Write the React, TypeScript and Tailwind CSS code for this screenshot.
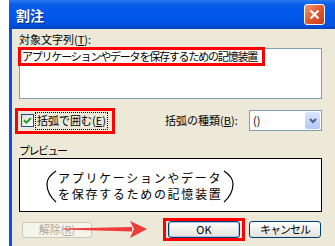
const jp = "font-['Noto_Sans_CJK_JP','Noto_Sans_CJK_SC',sans-serif]";

function CloseButton() {
  return (
    <div className="flex h-[21px] w-[21px] items-center justify-center rounded-[3px] border border-white bg-gradient-to-br from-[#F09878] via-[#E0582E] to-[#C43E18]">
      <svg width="11" height="11" viewBox="0 0 11 11">
        <path d="M1.5 1.5 L9.5 9.5 M9.5 1.5 L1.5 9.5" stroke="white" strokeWidth="2.2" />
      </svg>
    </div>
  );
}

function Checkbox() {
  return (
    <div className="flex h-[13px] w-[13px] items-center justify-center border border-[#1C5180] bg-gradient-to-br from-[#DCDCD7] to-white">
      <svg width="9" height="9" viewBox="0 0 9 9">
        <path d="M1 4.2 L3.4 6.6 L8 2" stroke="#21A121" strokeWidth="2" fill="none" />
      </svg>
    </div>
  );
}

function Paren({ right }: { right?: boolean }) {
  return (
    <svg width="13" height="34" viewBox="0 0 13 34" className="shrink-0">
      <path
        d={right ? 'M2 2 Q11 8 11 15 Q11 25 2 33' : 'M11 2 Q2 8 2 15 Q2 25 11 33'}
        stroke="black"
        strokeWidth="1.2"
        fill="none"
      />
    </svg>
  );
}

export default function App() {
  return (
    <div className={`relative h-[246px] w-[335px] overflow-hidden bg-white pl-[9px] text-black ${jp}`}>
      <div className="flex h-full flex-col">
        {/* title bar */}
        <div className="flex h-[29px] shrink-0 items-center justify-between bg-[linear-gradient(180deg,#2B78F0_0%,#0A5DE8_15%,#0058EE_50%,#0053E0_85%,#0043BE_100%)] pl-[7px] pr-[10px]">
          <span className="text-[14px] font-bold leading-none text-white [text-shadow:1px_1px_0_#0A2A8C]">割注</span>
          <CloseButton />
        </div>

        <div className="flex flex-1 border-l-[3px] border-[#0A52DE] bg-[#ECE9D8]">
          <div className="flex flex-1 flex-col pl-[7px] pr-[13px]">
            <div className="mt-[3px] h-[14px] text-[11px] leading-[14px]">
              対象文字列(<u>T</u>):
            </div>

            <div className="mt-[2px] h-[51px] border border-[#7F9DB9] bg-white">
              <div className="-ml-[2px] -mt-[2px] flex h-[19px] w-[247px] items-center border-[3px] border-[#FF0000] pl-[1px]">
                <span className="whitespace-nowrap text-[11px] leading-[13px] tracking-[-1.2px]">
                  アプリケーションやデータを保存するための記憶装置
                </span>
              </div>
            </div>

            <div className="mt-[8px] flex h-[27px] items-center">
              <div className="-ml-[4px] flex h-[26px] w-[100px] items-center border-[3px] border-[#FF0000] pl-[3px]">
                <Checkbox />
                <span className="ml-[1px] flex h-[18px] items-center whitespace-nowrap border border-dotted border-black px-[1px] text-[11px] leading-none">
                  括弧で囲む(<u>E</u>)
                </span>
              </div>
              <span className="ml-[50px] whitespace-nowrap text-[11px] leading-none">
                括弧の種類(<u>B</u>):
              </span>
              <div className="ml-auto flex h-[21px] w-[73px] items-center border border-[#7F9DB9] bg-white p-[1px]">
                <span className="flex-1 pl-[2px] text-[11px] leading-none">()</span>
                <div className="flex h-[17px] w-[15px] items-center justify-center rounded-[2px] bg-gradient-to-b from-[#DCE7FE] to-[#B2C6F5]">
                  <svg width="8" height="6" viewBox="0 0 8 6">
                    <path d="M1 1 L4 4 L7 1" stroke="#4D6185" strokeWidth="2" fill="none" />
                  </svg>
                </div>
              </div>
            </div>

            <div className="mt-[9px] h-[14px] text-[11px] leading-[14px] tracking-[-1.5px]">プレビュー</div>

            <div className="mt-[1px] flex h-[54px] border border-black bg-white pl-[25px] pt-[10px]">
              <Paren />
              <div className="pt-[1px] text-[12px] leading-[16px] tracking-[1.7px]">
                <div className="whitespace-nowrap">アプリケーションやデータ</div>
                <div className="whitespace-nowrap">を保存するための記憶装置</div>
              </div>
              <Paren right />
            </div>

            <div className="mt-[6px] flex h-[23px] items-center">
              <button
                type="button"
                disabled
                className="ml-[3px] h-[16px] w-[70px] rounded-[3px] border border-[#C9C7BA] bg-[#F5F4EA] text-[11px] leading-none text-[#ACA899]"
              >
                解除(<u>R</u>)
              </button>
              <div className="ml-[71px] flex h-[23px] w-[82px] items-center justify-center border-[3px] border-[#FF0000]">
                <button
                  type="button"
                  className="h-[17px] w-[72px] rounded-[3px] border border-[#003C74] bg-gradient-to-b from-white to-[#E3E2DA] text-[11px] leading-none shadow-[inset_0_0_0_1px_#A9C2F0]"
                >
                  OK
                </button>
              </div>
              <button
                type="button"
                className="ml-[4px] h-[17px] w-[72px] rounded-[3px] border border-[#003C74] bg-gradient-to-b from-white to-[#E3E2DA] text-[11px] leading-none tracking-[-1px]"
              >
                キャンセル
              </button>
            </div>
          </div>
        </div>
      </div>

      {/* annotation arrow */}
      <svg className="absolute left-[60px] top-[216px]" width="90" height="26" viewBox="60 216 90 26">
        <polygon points="63,228.6 132,227 132,231.4 63,229.4" fill="#EE3B3B" />
        <polygon points="130,221 147,229 130,238 134,229" fill="#EE3B3B" />
      </svg>
    </div>
  );
}
